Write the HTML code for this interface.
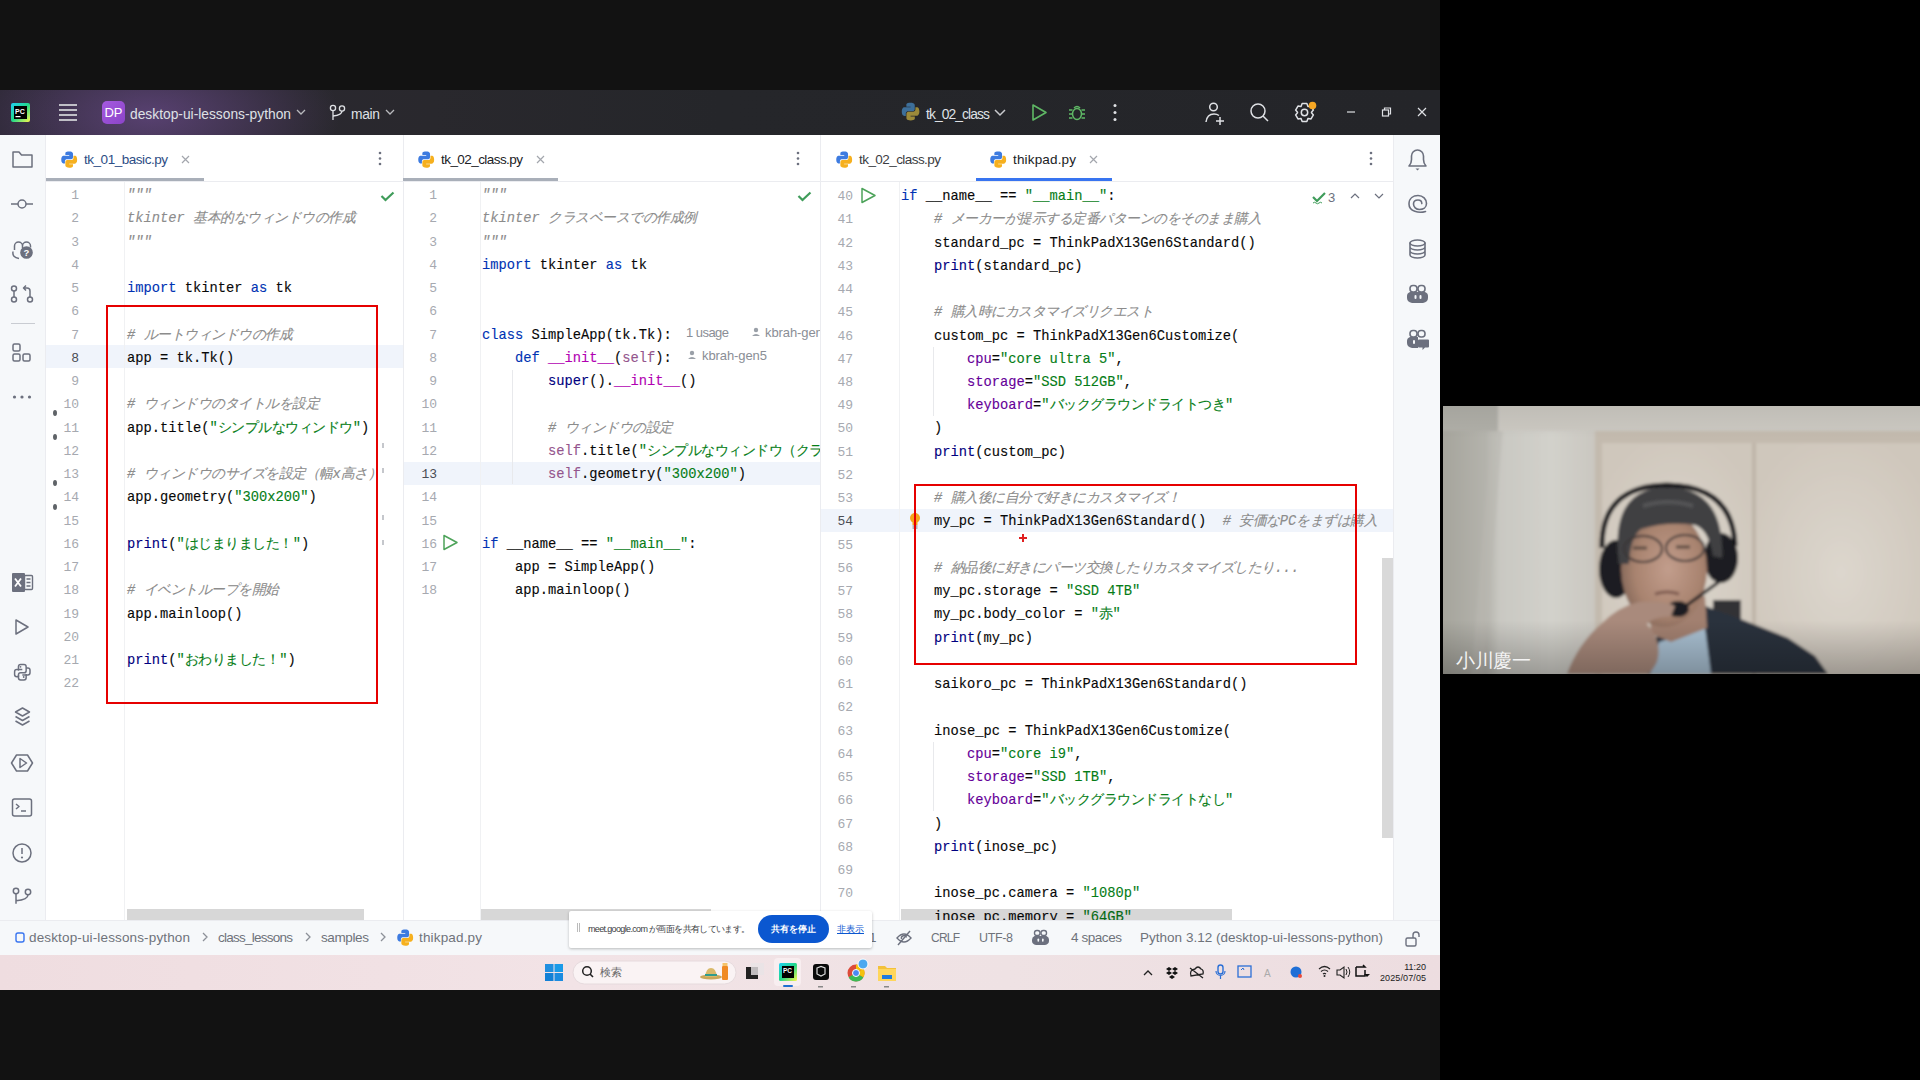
<!DOCTYPE html>
<html><head><meta charset="utf-8">
<style>
*{margin:0;padding:0;box-sizing:border-box}
html,body{width:1920px;height:1080px;overflow:hidden;background:#000}
body{position:relative;font-family:"Liberation Sans",sans-serif}
.a{position:absolute}
#screen{left:0;top:0;width:1440px;height:1080px;background:#121212}
#title{left:0;top:90px;width:1440px;height:45px;background:radial-gradient(ellipse 190px 90px at 150px 25px,rgba(125,85,165,0.55),rgba(125,85,165,0) 100%),linear-gradient(90deg,#2a2731 0%,#2b2832 5%,#29282d 30%,#25262a 50%,#242529 100%)}
#ltool{left:0;top:135px;width:46px;height:785px;background:#f6f8fa;border-right:1px solid #ebecf0}
#rtool{left:1393px;top:135px;width:47px;height:785px;background:#f6f8fa;border-left:1px solid #ebecf0}
.pane{top:135px;height:785px;background:#fff;overflow:hidden}
.tabs{left:0;top:0;right:0;height:47px;border-bottom:1px solid #ebecf0}
.tab{font-size:13.5px;color:#222;top:17px;white-space:nowrap}
.code{font-family:"Liberation Mono",monospace;font-size:13.75px;line-height:23.24px;white-space:pre;color:#080808;-webkit-text-stroke:0.12px currentColor}
.j{letter-spacing:-0.5px}
.ln{font-family:"Liberation Mono",monospace;font-size:13px;line-height:23.24px;color:#a6a9b0;text-align:right;white-space:pre}
.ln.cur{color:#4a4d55}
.hlrow{background:#f0f4fb}
#status{left:0;top:920px;width:1440px;height:35px;background:#f6f8fa;border-top:1px solid #ebecf0}
#taskbar{left:0;top:955px;width:1440px;height:35px;background:linear-gradient(90deg,#efdde0,#f2e3e6 40%,#efe2e4 70%,#eddde0)}
#cam{left:1443px;top:406px;width:477px;height:268px;background:#bdb9b2;overflow:hidden}
.tabbar{top:135px;height:47px;border-bottom:1px solid #ebecf0;background:transparent}
.gsep{top:47px;width:1px;height:738px;background:#f0f1f3}
.hscroll{top:774px;height:11px;background:rgba(0,0,0,0.155)}
.tab{position:absolute;top:151px;font-size:13.5px;color:#202124;white-space:nowrap;line-height:18px}
.hint{font-size:13px;color:#8a8e96;white-space:nowrap;line-height:16px}
.ttl{font-size:13.8px;color:#dfe1e5;white-space:nowrap;line-height:18px;margin-top:1.5px}
.st{top:929px;font-size:13.5px;color:#6f737a;white-space:nowrap;line-height:18px}

</style></head><body>
<div id="screen" class="a"></div>
<div id="title" class="a"></div>
<div id="ltool" class="a"></div>
<div id="p1" class="a pane" style="left:46px;width:357px">
<div class="a ln" style="left:0;width:33.0px;top:49.18px">1</div>
<div class="a code" style="left:81.0px;top:49.18px"><span style="color:#8c8c8c;font-style:italic;">"""</span></div>
<div class="a ln" style="left:0;width:33.0px;top:72.42px">2</div>
<div class="a code" style="left:81.0px;top:72.42px"><span style="color:#8c8c8c;font-style:italic;">tkinter <span class="j">基本的なウィンドウの作成</span></span></div>
<div class="a ln" style="left:0;width:33.0px;top:95.66px">3</div>
<div class="a code" style="left:81.0px;top:95.66px"><span style="color:#8c8c8c;font-style:italic;">"""</span></div>
<div class="a ln" style="left:0;width:33.0px;top:118.90px">4</div>
<div class="a ln" style="left:0;width:33.0px;top:142.14px">5</div>
<div class="a code" style="left:81.0px;top:142.14px"><span style="color:#0033b3;">import</span> tkinter <span style="color:#0033b3;">as</span> tk</div>
<div class="a ln" style="left:0;width:33.0px;top:165.38px">6</div>
<div class="a ln" style="left:0;width:33.0px;top:188.62px">7</div>
<div class="a code" style="left:81.0px;top:188.62px"><span style="color:#8c8c8c;font-style:italic;"># <span class="j">ルートウィンドウの作成</span></span></div>
<div class="a hlrow" style="left:0;top:210.36px;width:357px;height:23px"></div>
<div class="a ln cur" style="left:0;width:33.0px;top:211.86px">8</div>
<div class="a code" style="left:81.0px;top:211.86px">app = tk.Tk()</div>
<div class="a ln" style="left:0;width:33.0px;top:235.10px">9</div>
<div class="a ln" style="left:0;width:33.0px;top:258.34px">10</div>
<div class="a code" style="left:81.0px;top:258.34px"><span style="color:#8c8c8c;font-style:italic;"># <span class="j">ウィンドウのタイトルを設定</span></span></div>
<div class="a ln" style="left:0;width:33.0px;top:281.58px">11</div>
<div class="a code" style="left:81.0px;top:281.58px">app.title(<span style="color:#067d17;">"<span class="j">シンプルなウィンドウ</span>"</span>)</div>
<div class="a ln" style="left:0;width:33.0px;top:304.82px">12</div>
<div class="a ln" style="left:0;width:33.0px;top:328.06px">13</div>
<div class="a code" style="left:81.0px;top:328.06px"><span style="color:#8c8c8c;font-style:italic;"># <span class="j">ウィンドウのサイズを設定（幅</span>x<span class="j">高さ）</span></span></div>
<div class="a ln" style="left:0;width:33.0px;top:351.30px">14</div>
<div class="a code" style="left:81.0px;top:351.30px">app.geometry(<span style="color:#067d17;">"300x200"</span>)</div>
<div class="a ln" style="left:0;width:33.0px;top:374.54px">15</div>
<div class="a ln" style="left:0;width:33.0px;top:397.78px">16</div>
<div class="a code" style="left:81.0px;top:397.78px"><span style="color:#000080;">print</span>(<span style="color:#067d17;">"<span class="j">はじまりました！</span>"</span>)</div>
<div class="a ln" style="left:0;width:33.0px;top:421.02px">17</div>
<div class="a ln" style="left:0;width:33.0px;top:444.26px">18</div>
<div class="a code" style="left:81.0px;top:444.26px"><span style="color:#8c8c8c;font-style:italic;"># <span class="j">イベントループを開始</span></span></div>
<div class="a ln" style="left:0;width:33.0px;top:467.50px">19</div>
<div class="a code" style="left:81.0px;top:467.50px">app.mainloop()</div>
<div class="a ln" style="left:0;width:33.0px;top:490.74px">20</div>
<div class="a ln" style="left:0;width:33.0px;top:513.98px">21</div>
<div class="a code" style="left:81.0px;top:513.98px"><span style="color:#000080;">print</span>(<span style="color:#067d17;">"<span class="j">おわりました！</span>"</span>)</div>
<div class="a ln" style="left:0;width:33.0px;top:537.22px">22</div>
<div class="a gsep" style="left:78px"></div>
<div class="a hscroll" style="left:81px;width:237px"></div>
</div>
<div id="p2" class="a pane" style="left:403px;width:417px;border-left:1px solid #ebecf0">
<div class="a ln" style="left:0;width:33.0px;top:49.18px">1</div>
<div class="a code" style="left:78.0px;top:49.18px"><span style="color:#8c8c8c;font-style:italic;">"""</span></div>
<div class="a ln" style="left:0;width:33.0px;top:72.42px">2</div>
<div class="a code" style="left:78.0px;top:72.42px"><span style="color:#8c8c8c;font-style:italic;">tkinter <span class="j">クラスベースでの作成例</span></span></div>
<div class="a ln" style="left:0;width:33.0px;top:95.66px">3</div>
<div class="a code" style="left:78.0px;top:95.66px"><span style="color:#8c8c8c;font-style:italic;">"""</span></div>
<div class="a ln" style="left:0;width:33.0px;top:118.90px">4</div>
<div class="a code" style="left:78.0px;top:118.90px"><span style="color:#0033b3;">import</span> tkinter <span style="color:#0033b3;">as</span> tk</div>
<div class="a ln" style="left:0;width:33.0px;top:142.14px">5</div>
<div class="a ln" style="left:0;width:33.0px;top:165.38px">6</div>
<div class="a ln" style="left:0;width:33.0px;top:188.62px">7</div>
<div class="a code" style="left:78.0px;top:188.62px"><span style="color:#0033b3;">class</span> SimpleApp(tk.Tk):</div>
<div class="a ln" style="left:0;width:33.0px;top:211.86px">8</div>
<div class="a code" style="left:78.0px;top:211.86px">    <span style="color:#0033b3;">def</span> <span style="color:#b200b2;">__init__</span>(<span style="color:#94558d;">self</span>):</div>
<div class="a ln" style="left:0;width:33.0px;top:235.10px">9</div>
<div class="a code" style="left:78.0px;top:235.10px">        <span style="color:#000080;">super</span>().<span style="color:#b200b2;">__init__</span>()</div>
<div class="a ln" style="left:0;width:33.0px;top:258.34px">10</div>
<div class="a ln" style="left:0;width:33.0px;top:281.58px">11</div>
<div class="a code" style="left:78.0px;top:281.58px"><span style="color:#8c8c8c;font-style:italic;">        # <span class="j">ウィンドウの設定</span></span></div>
<div class="a ln" style="left:0;width:33.0px;top:304.82px">12</div>
<div class="a code" style="left:78.0px;top:304.82px">        <span style="color:#94558d;">self</span>.title(<span style="color:#067d17;">"<span class="j">シンプルなウィンドウ（クラスベース）</span>"</span>)</div>
<div class="a hlrow" style="left:0;top:326.56px;width:417px;height:23px"></div>
<div class="a ln cur" style="left:0;width:33.0px;top:328.06px">13</div>
<div class="a code" style="left:78.0px;top:328.06px">        <span style="color:#94558d;">self</span>.geometry(<span style="color:#067d17;">"300x200"</span>)</div>
<div class="a ln" style="left:0;width:33.0px;top:351.30px">14</div>
<div class="a ln" style="left:0;width:33.0px;top:374.54px">15</div>
<div class="a ln" style="left:0;width:33.0px;top:397.78px">16</div>
<div class="a code" style="left:78.0px;top:397.78px"><span style="color:#0033b3;">if</span> __name__ == <span style="color:#067d17;">"__main__"</span>:</div>
<div class="a ln" style="left:0;width:33.0px;top:421.02px">17</div>
<div class="a code" style="left:78.0px;top:421.02px">    app = SimpleApp()</div>
<div class="a ln" style="left:0;width:33.0px;top:444.26px">18</div>
<div class="a code" style="left:78.0px;top:444.26px">    app.mainloop()</div>
<div class="a hint" style="letter-spacing:-0.544px;left:282px;top:190px">1 usage</div>
<div class="a hint" style="letter-spacing:-0.087px;left:361px;top:190px">kbrah-gen5</div>
<div class="a hint" style="letter-spacing:-0.087px;left:298px;top:213px">kbrah-gen5</div>
<svg class="a" style="left:0;top:0" width="417" height="785"><g fill="#9aa0a8"><circle cx="352" cy="195" r="2.2"/><path d="M348 201 q4 -4 8 0z"/><circle cx="288" cy="218" r="2.2"/><path d="M284 224 q4 -4 8 0z"/></g></svg>
<div class="a gsep" style="left:76px"></div>
<div class="a hscroll" style="left:77px;width:230px"></div>
</div>
<div id="p3" class="a pane" style="left:820px;width:573px;border-left:1px solid #ebecf0">
<div class="a ln" style="left:0;width:32.0px;top:50.08px">40</div>
<div class="a code" style="left:80.0px;top:50.08px"><span style="color:#0033b3;">if</span> __name__ == <span style="color:#067d17;">"__main__"</span>:</div>
<div class="a ln" style="left:0;width:32.0px;top:73.32px">41</div>
<div class="a code" style="left:80.0px;top:73.32px"><span style="color:#8c8c8c;font-style:italic;">    # <span class="j">メーカーが提示する定番パターンのをそのまま購入</span></span></div>
<div class="a ln" style="left:0;width:32.0px;top:96.56px">42</div>
<div class="a code" style="left:80.0px;top:96.56px">    standard_pc = ThinkPadX13Gen6Standard()</div>
<div class="a ln" style="left:0;width:32.0px;top:119.80px">43</div>
<div class="a code" style="left:80.0px;top:119.80px">    <span style="color:#000080;">print</span>(standard_pc)</div>
<div class="a ln" style="left:0;width:32.0px;top:143.04px">44</div>
<div class="a ln" style="left:0;width:32.0px;top:166.28px">45</div>
<div class="a code" style="left:80.0px;top:166.28px"><span style="color:#8c8c8c;font-style:italic;">    # <span class="j">購入時にカスタマイズリクエスト</span></span></div>
<div class="a ln" style="left:0;width:32.0px;top:189.52px">46</div>
<div class="a code" style="left:80.0px;top:189.52px">    custom_pc = ThinkPadX13Gen6Customize(</div>
<div class="a ln" style="left:0;width:32.0px;top:212.76px">47</div>
<div class="a code" style="left:80.0px;top:212.76px">        <span style="color:#660099;">cpu</span>=<span style="color:#067d17;">"core ultra 5"</span>,</div>
<div class="a ln" style="left:0;width:32.0px;top:236.00px">48</div>
<div class="a code" style="left:80.0px;top:236.00px">        <span style="color:#660099;">storage</span>=<span style="color:#067d17;">"SSD 512GB"</span>,</div>
<div class="a ln" style="left:0;width:32.0px;top:259.24px">49</div>
<div class="a code" style="left:80.0px;top:259.24px">        <span style="color:#660099;">keyboard</span>=<span style="color:#067d17;">"<span class="j">バックグラウンドライトつき</span>"</span></div>
<div class="a ln" style="left:0;width:32.0px;top:282.48px">50</div>
<div class="a code" style="left:80.0px;top:282.48px">    )</div>
<div class="a ln" style="left:0;width:32.0px;top:305.72px">51</div>
<div class="a code" style="left:80.0px;top:305.72px">    <span style="color:#000080;">print</span>(custom_pc)</div>
<div class="a ln" style="left:0;width:32.0px;top:328.96px">52</div>
<div class="a ln" style="left:0;width:32.0px;top:352.20px">53</div>
<div class="a code" style="left:80.0px;top:352.20px"><span style="color:#8c8c8c;font-style:italic;">    # <span class="j">購入後に自分で好きにカスタマイズ！</span></span></div>
<div class="a hlrow" style="left:0;top:373.94px;width:573px;height:23px"></div>
<div class="a ln cur" style="left:0;width:32.0px;top:375.44px">54</div>
<div class="a code" style="left:80.0px;top:375.44px">    my_pc = ThinkPadX13Gen6Standard()  <span style="color:#8c8c8c;font-style:italic;"># <span class="j">安価な</span>PC<span class="j">をまずは購入</span></span></div>
<div class="a ln" style="left:0;width:32.0px;top:398.68px">55</div>
<div class="a ln" style="left:0;width:32.0px;top:421.92px">56</div>
<div class="a code" style="left:80.0px;top:421.92px"><span style="color:#8c8c8c;font-style:italic;">    # <span class="j">納品後に好きにパーツ交換したりカスタマイズしたり</span>...</span></div>
<div class="a ln" style="left:0;width:32.0px;top:445.16px">57</div>
<div class="a code" style="left:80.0px;top:445.16px">    my_pc.storage = <span style="color:#067d17;">"SSD 4TB"</span></div>
<div class="a ln" style="left:0;width:32.0px;top:468.40px">58</div>
<div class="a code" style="left:80.0px;top:468.40px">    my_pc.body_color = <span style="color:#067d17;">"<span class="j">赤</span>"</span></div>
<div class="a ln" style="left:0;width:32.0px;top:491.64px">59</div>
<div class="a code" style="left:80.0px;top:491.64px">    <span style="color:#000080;">print</span>(my_pc)</div>
<div class="a ln" style="left:0;width:32.0px;top:514.88px">60</div>
<div class="a ln" style="left:0;width:32.0px;top:538.12px">61</div>
<div class="a code" style="left:80.0px;top:538.12px">    saikoro_pc = ThinkPadX13Gen6Standard()</div>
<div class="a ln" style="left:0;width:32.0px;top:561.36px">62</div>
<div class="a ln" style="left:0;width:32.0px;top:584.60px">63</div>
<div class="a code" style="left:80.0px;top:584.60px">    inose_pc = ThinkPadX13Gen6Customize(</div>
<div class="a ln" style="left:0;width:32.0px;top:607.84px">64</div>
<div class="a code" style="left:80.0px;top:607.84px">        <span style="color:#660099;">cpu</span>=<span style="color:#067d17;">"core i9"</span>,</div>
<div class="a ln" style="left:0;width:32.0px;top:631.08px">65</div>
<div class="a code" style="left:80.0px;top:631.08px">        <span style="color:#660099;">storage</span>=<span style="color:#067d17;">"SSD 1TB"</span>,</div>
<div class="a ln" style="left:0;width:32.0px;top:654.32px">66</div>
<div class="a code" style="left:80.0px;top:654.32px">        <span style="color:#660099;">keyboard</span>=<span style="color:#067d17;">"<span class="j">バックグラウンドライトなし</span>"</span></div>
<div class="a ln" style="left:0;width:32.0px;top:677.56px">67</div>
<div class="a code" style="left:80.0px;top:677.56px">    )</div>
<div class="a ln" style="left:0;width:32.0px;top:700.80px">68</div>
<div class="a code" style="left:80.0px;top:700.80px">    <span style="color:#000080;">print</span>(inose_pc)</div>
<div class="a ln" style="left:0;width:32.0px;top:724.04px">69</div>
<div class="a ln" style="left:0;width:32.0px;top:747.28px">70</div>
<div class="a code" style="left:80.0px;top:747.28px">    inose_pc.camera = <span style="color:#067d17;">"1080p"</span></div>
<div class="a ln" style="left:0;width:32.0px;top:770.52px">71</div>
<div class="a code" style="left:80.0px;top:770.52px">    inose_pc.memory = <span style="color:#067d17;">"64GB"</span></div>
<div class="a gsep" style="left:78px"></div>
<div class="a hscroll" style="left:80px;width:331px"></div>
<div class="a" style="left:561px;top:423px;width:11px;height:280px;background:#d9d9d9"></div>
</div>
<div class="a tabbar" style="left:46px;width:357px"></div>
<div class="a tabbar" style="left:404px;width:416px"></div>
<div class="a tabbar" style="left:821px;width:572px"></div>
<div class="a" style="left:46px;top:178px;width:158px;height:3px;background:#a9afb9"></div>
<div class="a" style="left:403px;top:178px;width:155px;height:3px;background:#a9afb9"></div>
<div class="a" style="left:976px;top:178px;width:136px;height:3px;background:#3874f0"></div>
<div class="a tab" style="letter-spacing:-0.466px;left:84px;color:#2d4d85">tk_01_basic.py</div>
<div class="a tab" style="letter-spacing:-0.562px;left:441px">tk_02_class.py</div>
<div class="a tab" style="letter-spacing:-0.562px;left:859px;color:#3b3d42">tk_02_class.py</div>
<div class="a tab" style="letter-spacing:0.161px;left:1013px">thikpad.py</div>
<div id="rtool" class="a"></div>
<div id="status" class="a"></div>
<div id="taskbar" class="a"></div>
<div id="cam" class="a"></div>
<div class="a ttl" style="letter-spacing:-0.003px;left:130px;top:104px">desktop-ui-lessons-python</div>
<div class="a ttl" style="letter-spacing:-0.302px;left:351px;top:104px">main</div>
<div class="a ttl" style="letter-spacing:-0.886px;left:926px;top:104px">tk_02_class</div>
<div class="a" style="left:102px;top:101px;width:23px;height:23px;border-radius:5px;background:linear-gradient(135deg,#a55ae0,#8b44c8);color:#fff;font-size:13px;line-height:23px;text-align:center;letter-spacing:0px">DP</div>
<div class="a st" style="letter-spacing:0.142px;left:29px">desktop-ui-lessons-python</div>
<div class="a st" style="letter-spacing:-0.754px;left:218px">class_lessons</div>
<div class="a st" style="letter-spacing:-0.380px;left:321px">samples</div>
<div class="a st" style="letter-spacing:0.161px;left:419px">thikpad.py</div>
<div class="a st" style="left:869px">1</div>
<div class="a st" style="letter-spacing:-0.781px;left:931px;font-size:12px">CRLF</div>
<div class="a st" style="letter-spacing:-0.355px;left:979px;font-size:12.5px">UTF-8</div>
<div class="a st" style="letter-spacing:-0.435px;left:1071px">4 spaces</div>
<div class="a st" style="letter-spacing:0.016px;left:1140px">Python 3.12 (desktop-ui-lessons-python)</div>
<svg class="a" style="left:0;top:0" width="1920" height="1080" viewBox="0 0 1920 1080">
<defs>
<linearGradient id="pcg" x1="0" y1="0" x2="1" y2="1"><stop offset="0" stop-color="#21d0f5"/><stop offset="0.5" stop-color="#21d789"/><stop offset="1" stop-color="#fcf84a"/></linearGradient>
<linearGradient id="pyb" x1="0" y1="0" x2="1" y2="1"><stop offset="0" stop-color="#5a9fd4"/><stop offset="1" stop-color="#306998"/></linearGradient>
<g id="py">
 <path d="M8 0.5 C4.3 0.5 4.5 2.1 4.5 2.1 V3.8 H8.1 V4.3 H3.1 C3.1 4.3 0.7 4.1 0.7 7.9 C0.7 11.7 2.8 11.5 2.8 11.5 H4.1 V9.8 C4.1 9.8 4 7.7 6.1 7.7 H9.6 C9.6 7.7 11.6 7.7 11.6 5.8 V2.7 C11.6 2.7 11.8 0.5 8 0.5 Z" fill="#3d7be0"/>
 <path d="M8.1 15.5 C11.8 15.5 11.6 13.9 11.6 13.9 V12.2 H8 V11.7 H13 C13 11.7 15.4 11.9 15.4 8.1 C15.4 4.3 13.3 4.5 13.3 4.5 H12 V6.2 C12 6.2 12.1 8.3 10 8.3 H6.5 C6.5 8.3 4.5 8.3 4.5 10.2 V13.3 C4.5 13.3 4.3 15.5 8.1 15.5 Z" fill="#f6b01e"/>
</g>
</defs>
<!-- ===== title bar ===== -->
<g>
 <rect x="11" y="103" width="19" height="19" rx="2" fill="url(#pcg)"/>
 <rect x="14" y="106" width="13" height="13" fill="#000"/>
 <text x="15" y="113.5" font-family="Liberation Sans" font-size="7" font-weight="bold" fill="#fff">PC</text>
 <rect x="15.5" y="116" width="5" height="1.2" fill="#fff"/>
</g>
<g stroke="#cfd0d4" stroke-width="1.8">
 <line x1="59" y1="105" x2="77" y2="105"/><line x1="59" y1="110" x2="77" y2="110"/><line x1="59" y1="115" x2="77" y2="115"/><line x1="59" y1="120" x2="77" y2="120"/>
</g>
<g fill="none" stroke="#b8b9bd" stroke-width="1.3">
 <path d="M297 110 l4 4 l4 -4"/>
 <path d="M386 110 l4 4 l4 -4"/>
 <path d="M995 110 l5 5 l5 -5" stroke="#c9cacd" stroke-width="1.5"/>
</g>
<g fill="none" stroke="#dfe1e5" stroke-width="1.3">
 <circle cx="333" cy="108" r="2.6"/><circle cx="342" cy="108.5" r="2.6"/>
 <path d="M333 110.6 V120"/><path d="M342 111 q0 4 -9 5"/>
</g>
<!-- python icon in run config -->
<g transform="translate(901,102) scale(0.8)">
 <path d="M11.9 1 C6.3 1 6.7 3.4 6.7 3.4 V5.9 H12 V6.7 H4.6 C4.6 6.7 1 6.3 1 12 C1 17.6 4.1 17.4 4.1 17.4 H6 V14.8 C6 14.8 5.9 11.7 9 11.7 H14.3 C14.3 11.7 17.2 11.7 17.2 8.9 V4.1 C17.2 4.1 17.6 1 11.9 1 Z" fill="#3d6f9a"/>
 <path d="M12.1 23 C17.7 23 17.3 20.6 17.3 20.6 V18.1 H12 V17.3 H19.4 C19.4 17.3 23 17.7 23 12 C23 6.4 19.9 6.6 19.9 6.6 H18 V9.2 C18 9.2 18.1 12.3 15 12.3 H9.7 C9.7 12.3 6.8 12.3 6.8 15.1 V19.9 C6.8 19.9 6.4 23 12.1 23 Z" fill="#9c8a3a"/>
</g>
<g fill="none" stroke="#5fb865" stroke-width="1.6" stroke-linejoin="round">
 <path d="M1033 105 L1046 112.5 L1033 120 Z"/>
</g>
<g fill="none" stroke="#5fb865" stroke-width="1.5">
 <ellipse cx="1077" cy="114" rx="4.5" ry="5.5"/>
 <path d="M1074 108 q3 -3 6 0"/>
 <path d="M1069 110 h3.5 M1069 114 h3.5 M1069 118 h3.5 M1081.5 110 h3.5 M1081.5 114 h3.5 M1081.5 118 h3.5"/>
</g>
<g fill="#dfe1e5"><circle cx="1115" cy="105.5" r="1.5"/><circle cx="1115" cy="112.5" r="1.5"/><circle cx="1115" cy="119.5" r="1.5"/></g>
<g fill="none" stroke="#dfe1e5" stroke-width="1.5">
 <circle cx="1213.5" cy="107" r="3.8"/>
 <path d="M1206 122 q1 -8 8 -8 q3 0 5 1.5"/>
 <path d="M1220 117 v8 M1216 121 h8"/>
 <circle cx="1258" cy="111" r="7"/><path d="M1263 116 l5 5"/>
</g>
<g fill="none" stroke="#dfe1e5" stroke-width="1.5">
 <path d="M1301.14 106.36 L1302.13 103.61 L1306.87 103.61 L1307.86 106.36 L1308.14 106.52 L1311.02 106.01 L1313.38 110.10 L1311.50 112.33 L1311.50 112.67 L1313.38 114.90 L1311.02 118.99 L1308.14 118.48 L1307.86 118.64 L1306.87 121.39 L1302.13 121.39 L1301.14 118.64 L1300.86 118.48 L1297.98 118.99 L1295.62 114.90 L1297.50 112.67 L1297.50 112.33 L1295.62 110.10 L1297.98 106.01 L1300.86 106.52 Z" stroke-linejoin="round"/>
 <circle cx="1304.5" cy="112.5" r="3.2"/>
</g>
<circle cx="1312.5" cy="105.5" r="3.8" fill="#f5a623"/>
<g fill="none" stroke="#dfe1e5" stroke-width="1.2">
 <path d="M1347 112 h8"/>
 <rect x="1382.5" y="110" width="6" height="6"/><path d="M1384.5 110 v-2 h6 v6 h-2"/>
 <path d="M1418 108 l8 8 M1426 108 l-8 8"/>
</g>
<!-- ===== left toolbar ===== -->
<g fill="none" stroke="#6c707e" stroke-width="1.5" stroke-linejoin="round">
 <path d="M13 152 h6 l2.5 3 h10.5 v12 h-19 z"/>
 <path d="M11 204 h7 M26 204 h7"/><circle cx="22" cy="204" r="4"/>
 <circle cx="14" cy="288.5" r="2.5"/><circle cx="14" cy="299.5" r="2.5"/><circle cx="30" cy="299.5" r="2.5"/>
 <path d="M14 291 v6 M30 297 v-6 q0 -3 -3 -3 h-3 M26 285.5 l-2.5 2.5 l2.5 2.5"/>
 <rect x="13" y="344" width="7" height="7" rx="1.5"/><rect x="13" y="354" width="7" height="7" rx="1.5"/><rect x="23" y="354" width="7" height="7" rx="1.5"/>
 <path d="M16 620 l12 7 l-12 7 z"/>
 <path d="M15.5 712 l7 -4 l7 4 l-7 4 z M15.5 716.5 l7 4 l7 -4 M15.5 721 l7 4 l7 -4"/>
 <path d="M16.5 755 h11 l5 8 l-5 8 h-11 l-5 -8 z"/><path d="M20 758.5 l6.5 4.5 l-6.5 4.5 z"/>
 <rect x="12.5" y="799" width="19" height="17" rx="2"/><path d="M16 804 l3 2.5 l-3 2.5 M21 811 h5"/>
 <circle cx="22" cy="853" r="9"/><path d="M22 848 v6"/>
 <circle cx="16" cy="891" r="2.7"/><circle cx="28" cy="892" r="2.7"/><path d="M16 893.7 v10 M28 894.7 q0 5 -12 6"/>
</g>
<g fill="#6c707e"><circle cx="22" cy="857.5" r="1.1"/>
 <circle cx="14.5" cy="397" r="1.6"/><circle cx="22" cy="397" r="1.6"/><circle cx="29.5" cy="397" r="1.6"/>
</g>
<rect x="11" y="323" width="24" height="1" fill="#c9ccd2"/>
<!-- AI help icon -->
<g fill="none" stroke="#6c707e" stroke-width="1.5"><path d="M14.5 250 v-4 a4 4 0 0 1 8 0 v2 M22.5 246 a4 4 0 0 1 8 0 v1.5 M13 251.5 q-1 6 6 7"/></g>
<circle cx="26.5" cy="252.5" r="6.3" fill="#6c707e"/><text x="26.5" y="256" font-family="Liberation Sans" font-size="9.5" font-weight="bold" fill="#fff" text-anchor="middle">?</text>
<!-- excel -->
<g>
 <rect x="12" y="573" width="13" height="19" rx="1" fill="#6c707e"/>
 <rect x="24.5" y="575.5" width="8" height="14" rx="1" fill="none" stroke="#6c707e" stroke-width="1.4"/>
 <path d="M26.5 579 h4 M26.5 582.5 h4 M26.5 586 h4" stroke="#6c707e" stroke-width="1.4"/>
 <path d="M15 578.5 l6 8 M21 578.5 l-6 8" stroke="#fff" stroke-width="1.8"/>
</g>
<!-- indent guides -->
<g fill="#e8e9ec"><rect x="512" y="370" width="1" height="114"/><rect x="933" y="347" width="1" height="69"/><rect x="933" y="742" width="1" height="69"/></g>
<!-- python console -->
<g transform="translate(13.5,663.5) scale(1.1)" fill="none" stroke="#6c707e" stroke-width="1.35" stroke-linejoin="round">
 <path d="M4.5 6.5 V3 Q4.5 1 6.5 1 H9.5 Q11.5 1 11.5 3 V6.5 Q11.5 8.5 9.5 8.5 H6.5 Q4.5 8.5 4.5 10.5 V12 H3 Q1 12 1 10 V7.5 Q1 5.5 3 5.5 H8"/>
 <path d="M11.5 9.5 V13 Q11.5 15 9.5 15 H6.5 Q4.5 15 4.5 13 V10.5 M11.5 4 H13 Q15 4 15 6 V8.5 Q15 10.5 13 10.5 H8"/>
</g>
<g fill="#6c707e"><circle cx="20.5" cy="666.8" r="0.9"/><circle cx="23.7" cy="677" r="0.9"/></g>
<!-- ===== right toolbar ===== -->
<g fill="none" stroke="#6c707e" stroke-width="1.6" stroke-linejoin="round" stroke-linecap="round">
 <path d="M1409 166 h17 q-2.5 -2.5 -2.5 -6.5 v-3.5 a6 6 0 0 0 -12 0 v3.5 q0 4 -2.5 6.5 z"/>
 <path d="M1425.5 211.5 C1419 213.5 1409 211.5 1409 204 C1409 198 1413.5 195.5 1418 195.5 C1423 195.5 1426.5 199 1426.5 203.5 C1426.5 207.5 1423 209.5 1419.5 209.5 C1416 209.5 1413.5 207 1413.5 204 C1413.5 201.5 1415.5 200 1418 200 C1420.2 200 1421.8 201.6 1421.8 203.6"/>
 <ellipse cx="1417.5" cy="243" rx="7.5" ry="3"/><path d="M1410 243 v12 a7.5 3 0 0 0 15 0 v-12 M1410 247 a7.5 3 0 0 0 15 0 M1410 251 a7.5 3 0 0 0 15 0"/>
 <rect x="1410" y="285.5" width="7" height="6.5" rx="3"/><rect x="1418" y="285.5" width="7" height="6.5" rx="3"/>
 <rect x="1410" y="330.5" width="7" height="6.5" rx="3"/><rect x="1418" y="330.5" width="7" height="6.5" rx="3"/>
</g>
<g fill="#6c707e">
 <path d="M1410 292 h15 q3 1 3 4 v2 q0 4 -5 5 h-11 q-5 -1 -5 -5 v-2 q0 -3 3 -4z"/>
 <path d="M1410 337 h8 v11 h-6 q-5 -1 -5 -5 v-2 q0 -3 3 -4z"/>
 <path d="M1419 339.5 h9 q1 0 1 1 v6 q0 1 -1 1 h-3 l-2.5 2.5 v-2.5 h-3.5 q-1 0 -1 -1 v-6 q0 -1 1 -1z"/>
</g>
<path d="M1415.5 168.5 h4 l-2 2z" fill="#6c707e"/>
<g fill="#f6f8fa"><rect x="1414.5" y="295" width="2" height="4" rx="1"/><rect x="1419.5" y="295" width="2" height="4" rx="1"/><rect x="1413" y="340" width="2" height="4" rx="1"/></g>
<!-- ===== tabs: python icons ===== -->


<!-- tab close / kebab -->
<g fill="none" stroke="#a3a6ad" stroke-width="1.2">
 <path d="M182 156 l7 7 M189 156 l-7 7"/>
 <path d="M537 156 l7 7 M544 156 l-7 7"/>
 <path d="M1090 156 l7 7 M1097 156 l-7 7"/>
</g>
<g fill="#6c707e">
 <circle cx="380" cy="153" r="1.3"/><circle cx="380" cy="158.5" r="1.3"/><circle cx="380" cy="164" r="1.3"/>
 <circle cx="798" cy="153" r="1.3"/><circle cx="798" cy="158.5" r="1.3"/><circle cx="798" cy="164" r="1.3"/>
 <circle cx="1371" cy="153" r="1.3"/><circle cx="1371" cy="158.5" r="1.3"/><circle cx="1371" cy="164" r="1.3"/>
</g>
<!-- check marks -->
<g fill="none" stroke="#3f9c5a" stroke-width="2.2">
 <path d="M381.5 196 l4 4 l8 -7.5"/>
 <path d="M798.5 196 l4 4 l8 -7.5"/>
 <path d="M1313 197 l4 4 l8 -8"/>
</g>
<path d="M1313 203 q1.5 -1.5 3 0 q1.5 1.5 3 0 q1.5 -1.5 3 0" fill="none" stroke="#3f9c5a" stroke-width="1"/>
<text x="1328" y="202" font-family="Liberation Sans" font-size="13" fill="#6c707e">3</text>
<g fill="none" stroke="#6c707e" stroke-width="1.2"><path d="M1351 198 l4 -4 l4 4"/><path d="M1375 194 l4 4 l4 -4"/></g>
<!-- gutter run icons -->
<g fill="none" stroke="#4da35a" stroke-width="1.5" stroke-linejoin="round">
 <path d="M862 188.5 L875 195.5 L862 202.5 Z"/>
 <path d="M444 535.5 L457 542.5 L444 549.5 Z"/>
</g>
<!-- bulb -->
<circle cx="915" cy="518" r="5" fill="#f5a41a"/><path d="M912.5 522 h5 v3 h-5z" fill="#f5a41a"/>
<path d="M912.5 526 h5 M912.5 528 h5" stroke="#555" stroke-width="0.8"/>
<!-- red plus -->
<path d="M1019 538 h8 M1023 534 v8" stroke="#e02020" stroke-width="2"/>
<!-- red boxes -->
<rect x="107" y="306" width="270" height="397" fill="none" stroke="#e60000" stroke-width="2"/>
<rect x="915" y="485" width="441" height="179" fill="none" stroke="#e60000" stroke-width="2"/>
<!-- bookmarks / markers -->
<g fill="#5f6368"><ellipse cx="55" cy="413" rx="2" ry="3"/><ellipse cx="55" cy="437" rx="2" ry="3"/><ellipse cx="55" cy="483" rx="2" ry="3"/><ellipse cx="55" cy="507" rx="2" ry="3"/></g>
<g fill="#c5c7cc"><rect x="382" y="443" width="2" height="5"/><rect x="382" y="468" width="2" height="5"/><rect x="382" y="515" width="2" height="5"/><rect x="382" y="540" width="2" height="5"/></g>
<use href="#py" transform="translate(60.5,151.0) scale(1.08)"/><use href="#py" transform="translate(417.5,151.0) scale(1.08)"/><use href="#py" transform="translate(835.5,151.0) scale(1.08)"/><use href="#py" transform="translate(989.5,151.0) scale(1.08)"/><use href="#py" transform="translate(396.5,929.0) scale(1.08)"/>
</svg>

<svg class="a" style="left:0;top:0" width="1440" height="1080" viewBox="0 0 1440 1080">
<!-- status bar icons -->
<rect x="16" y="933" width="8" height="9" rx="2" fill="none" stroke="#3874f0" stroke-width="1.4"/>
<g fill="none" stroke="#8c9098" stroke-width="1.3">
 <path d="M203 933 l4 4 l-4 4 M306 933 l4 4 l-4 4 M381 933 l4 4 l-4 4"/>
</g>
<g fill="none" stroke="#6c707e" stroke-width="1.4">
 <path d="M897 938 q7 -8 14 0 q-7 8 -14 0 z"/><path d="M901.5 939 a2.6 2.6 0 0 1 5 -1.5"/><path d="M898 945 l12 -14"/>
 <rect x="1034.5" y="930.5" width="5.5" height="5" rx="2.3"/><rect x="1041" y="930.5" width="5.5" height="5" rx="2.3"/>
</g>
<path d="M1034.5 936 h12 q2.5 1 2.5 3.5 v1.5 q0 3.2 -4 4 h-9 q-4 -0.8 -4 -4 v-1.5 q0 -2.5 2.5 -3.5z" fill="#6c707e"/>
<g fill="#f6f8fa"><rect x="1037.5" y="938.5" width="1.6" height="3.2" rx="0.8"/><rect x="1042" y="938.5" width="1.6" height="3.2" rx="0.8"/></g>
<g fill="none" stroke="#6c707e" stroke-width="1.4">
 <rect x="1406" y="938" width="10" height="8" rx="1.5"/><path d="M1413 938 v-3 a3 3 0 0 1 6 0 v2"/>
</g>
<!-- taskbar -->
<g>
 <rect x="545" y="964" width="8.5" height="8" fill="#1f8fe0"/><rect x="554.5" y="964" width="8.5" height="8" fill="#1a9ae8"/>
 <rect x="545" y="973" width="8.5" height="8" fill="#1280d6"/><rect x="554.5" y="973" width="8.5" height="8" fill="#1a8be0"/>
</g>
<rect x="573" y="961" width="163" height="23" rx="11.5" fill="#faf3f4" stroke="#e6dadd" stroke-width="1"/>
<circle cx="587" cy="971" r="4.3" fill="none" stroke="#222" stroke-width="1.5"/><path d="M590 974 l3 3" stroke="#222" stroke-width="1.6"/>
<text x="600" y="976" font-size="10.5" fill="#666">検索</text>
<ellipse cx="711" cy="977" rx="11" ry="2.5" fill="#c9a75a"/><path d="M705 977 q1 -9 6 -9 q5 0 6 9 z" fill="#d9b96a"/><rect x="705" y="974" width="12" height="2" fill="#2f9c8e"/>
<rect x="722" y="966" width="6" height="14" rx="1" fill="#f08a24"/><rect x="722.5" y="963" width="5" height="3" fill="#f5c36a"/>
<rect x="746" y="967" width="12" height="12" fill="#222"/><rect x="751" y="963" width="13" height="12" fill="#e8e4e6" opacity="0.8"/>
<rect x="774" y="958" width="27" height="28" rx="4" fill="#f8eef0"/>
<rect x="779" y="963" width="18" height="18" rx="1.5" fill="url(#pcg2)"/><rect x="782" y="966" width="12" height="12" fill="#000"/>
<text x="783" y="973" font-family="Liberation Sans" font-size="6.5" font-weight="bold" fill="#fff">PC</text>
<rect x="783" y="985" width="10" height="2" rx="1" fill="#1f6fd0"/>
<rect x="813" y="964" width="16" height="16" rx="3" fill="#0a0a0a"/><path d="M817 968 l4 -1.5 l4 1.5 v6 l-4 2 l-4 -2z" fill="none" stroke="#ddd" stroke-width="1.2"/>
<rect x="818" y="986" width="5" height="1.5" fill="#888"/>
<circle cx="856" cy="973" r="8.5" fill="#dd4b39"/><path d="M856 973 l0 -8.5 a8.5 8.5 0 0 1 7.4 4.2z" fill="#f4c20d"/><path d="M856 973 l7.4 4.3 a8.5 8.5 0 0 1 -14.8 0z" fill="#3cba54"/><path d="M856 973 l7.4 -4.3 a8.5 8.5 0 0 1 0 8.6z" fill="#f4c20d"/><circle cx="856" cy="973" r="3.5" fill="#4a8af4" stroke="#fff" stroke-width="1"/>
<circle cx="863" cy="964" r="5" fill="#4aa8f0" stroke="#fff" stroke-width="1"/>
<rect x="851" y="986" width="5" height="1.5" fill="#888"/>
<path d="M878 966 h7 l2 2 h9 v13 h-18z" fill="#f3c13a"/><rect x="878" y="969" width="18" height="12" fill="#ffd65c"/><rect x="882" y="975" width="10" height="4" fill="#1f7ae0"/>
<rect x="884" y="986" width="5" height="1.5" fill="#888"/>
<!-- tray -->
<path d="M1144 975 l4 -4 l4 4" fill="none" stroke="#222" stroke-width="1.3"/>
<path d="M1166 969 l3 -2 l3 2 l-3 2z M1172 969 l3 -2 l3 2 l-3 2z M1166 973 l3 -2 l3 2 l-3 2z M1172 973 l3 -2 l3 2 l-3 2z M1169 977 l3 -2 l3 2 l-3 2z" fill="#111"/>
<path d="M1191 976 q-2 -6 4 -7 q3 -4 6 0 q3 1 2 5 z M1190 968 l13 10" fill="none" stroke="#222" stroke-width="1.3"/>
<rect x="1218" y="965" width="5" height="9" rx="2.5" fill="none" stroke="#2b6fd6" stroke-width="1.4"/><path d="M1216 971 a4.5 4.5 0 0 0 9 0 M1220.5 976 v3" fill="none" stroke="#2b6fd6" stroke-width="1.2"/>
<rect x="1238" y="966" width="13" height="11" fill="none" stroke="#2b6fd6" stroke-width="1.3"/><path d="M1241 970 l2 -2 l1 2" stroke="#2b6fd6" fill="none"/>
<text x="1264" y="977" font-size="10" fill="#aaa">A</text>
<circle cx="1296" cy="972" r="5.5" fill="#1f6fd6"/><circle cx="1300" cy="976" r="2" fill="#e84a3a"/>
<path d="M1319 969 q5.5 -5 11 0 M1321 971.5 q3.5 -3 7 0 M1323 974 q1.5 -1.2 3 0" fill="none" stroke="#222" stroke-width="1.2"/><circle cx="1324.5" cy="976" r="1" fill="#222"/>
<path d="M1337 970 h3 l4 -3 v11 l-4 -3 h-3z" fill="none" stroke="#222" stroke-width="1.1"/><path d="M1346 969 q2 3 0 6 M1348 967 q3.5 5 0 10" fill="none" stroke="#222" stroke-width="1"/>
<path d="M1356 967 h9 l-2 -2 M1356 967 v9 h9 v-6" fill="none" stroke="#111" stroke-width="1.5"/><path d="M1364 974 l3 3 l3 -3z" fill="#111"/>
<text x="1426" y="969.5" font-size="9" fill="#222" text-anchor="end">11:20</text>
<text x="1426" y="980.5" font-size="9" fill="#222" text-anchor="end" textLength="46">2025/07/05</text>
<defs><linearGradient id="pcg2" x1="0" y1="0" x2="1" y2="1"><stop offset="0" stop-color="#21d0f5"/><stop offset="0.5" stop-color="#21d789"/><stop offset="1" stop-color="#fcf84a"/></linearGradient></defs>
</svg>
<!-- meet notification -->
<div class="a" style="left:569px;top:911px;width:303px;height:37px;background:#fff;box-shadow:0 1px 3px rgba(0,0,0,0.25);border-radius:2px"></div>
<div class="a" style="left:577px;top:923px;width:1px;height:9px;background:#bbb"></div>
<div class="a" style="left:579px;top:923px;width:1px;height:9px;background:#bbb"></div>
<div class="a" style="letter-spacing:-0.650px;left:588px;top:923px;font-size:9px;color:#3c4043;white-space:nowrap;line-height:12px">meet.google.com が画面を共有しています。</div>
<div class="a" style="left:758px;top:915px;width:71px;height:28px;border-radius:14px;background:#0b57d0;color:#fff;font-size:9px;font-weight:bold;text-align:center;line-height:28px">共有を停止</div>
<div class="a" style="letter-spacing:0.000px;left:837px;top:923px;font-size:9px;color:#0b57d0;text-decoration:underline;white-space:nowrap;line-height:12px">非表示</div>
<!-- webcam -->
<div class="a" style="left:1443px;top:406px;width:477px;height:268px;overflow:hidden;background:#c9c5bd">
<svg width="477" height="268" viewBox="0 0 477 268" style="position:absolute;left:0;top:0">
<defs>
<filter id="bl" x="-5%" y="-5%" width="110%" height="110%"><feGaussianBlur stdDeviation="1.4"/></filter>
<linearGradient id="wall" x1="0" y1="0" x2="1" y2="0">
 <stop offset="0" stop-color="#a4a39b"/><stop offset="0.3" stop-color="#b4b3ac"/><stop offset="0.38" stop-color="#c9c8c2"/><stop offset="0.7" stop-color="#d2d1cb"/><stop offset="1" stop-color="#c9c6bf"/>
</linearGradient>
<linearGradient id="shade" x1="0" y1="0" x2="0" y2="1">
 <stop offset="0" stop-color="#000" stop-opacity="0.06"/><stop offset="0.12" stop-color="#000" stop-opacity="0"/><stop offset="0.8" stop-color="#000" stop-opacity="0"/><stop offset="1" stop-color="#000" stop-opacity="0.25"/>
</linearGradient>
<radialGradient id="face" cx="0.55" cy="0.5" r="0.6"><stop offset="0" stop-color="#c29d8c"/><stop offset="0.65" stop-color="#a8836f"/><stop offset="1" stop-color="#7f6356"/></radialGradient>
<radialGradient id="door" cx="0.5" cy="0.55" r="0.6"><stop offset="0" stop-color="#dcd6cd"/><stop offset="1" stop-color="#cfc7bc"/></radialGradient>
</defs>
<g filter="url(#bl)">
<rect x="-5" y="-5" width="490" height="280" fill="#d1cbc3"/>
<rect x="-5" y="-5" width="162" height="280" fill="url(#wall)"/>
<path d="M50 -5 L62 -5 L40 275 L28 275 Z" fill="#b9b8b1" opacity="0.6"/>
<rect x="152" y="25" width="330" height="250" fill="#c3baae"/>
<rect x="159" y="37" width="150" height="235" fill="url(#door)"/>
<rect x="309" y="37" width="4" height="235" fill="#bfb5a9"/>
<rect x="313" y="37" width="170" height="235" fill="url(#door)"/>
<rect x="-5" y="-5" width="490" height="30" fill="#ccc9c2"/>
<rect x="-5" y="-5" width="60" height="30" fill="#b0afa8"/>
<!-- back chair -->
<rect x="270" y="194" width="28" height="24" fill="#333234"/>
<!-- jacket -->
<path d="M196 268 L212 232 L262 200 L300 214 L345 232 L372 250 L385 268 Z" fill="#29323e"/>
<!-- tshirt -->
<path d="M207 268 L216 236 L262 222 L268 268 Z" fill="#a9c0d2"/>
<!-- neck -->
<path d="M206 192 L262 190 L264 222 L228 236 L208 228 Z" fill="#a2806f"/>
<!-- headphone cups -->
<ellipse cx="173" cy="163" rx="17" ry="29" fill="#1d1e22"/>
<ellipse cx="278" cy="152" rx="17" ry="25" fill="#1d1e22"/>
<!-- face -->
<ellipse cx="221" cy="163" rx="43" ry="58" fill="url(#face)"/>
<!-- hair -->
<path d="M176 158 Q166 82 224 81 Q282 82 279 152 L270 150 Q266 124 252 119 Q224 115 198 123 Q187 131 186 158 Z" fill="#3f4042"/>
<path d="M200 100 Q225 92 250 100" stroke="#6a6a6a" stroke-width="4" fill="none" opacity="0.5"/>
<!-- headband -->
<path d="M159 142 Q158 80 224 79 Q290 80 292 140" fill="none" stroke="#19191c" stroke-width="5"/>
<!-- glasses -->
<ellipse cx="200" cy="143" rx="19" ry="13" fill="none" stroke="#3a3436" stroke-width="2"/>
<ellipse cx="242" cy="142" rx="19" ry="13" fill="none" stroke="#3a3436" stroke-width="2"/>
<!-- brows/eyes -->
<path d="M190 142 h14 M233 141 h14" stroke="#5a4840" stroke-width="3"/>
<!-- mouth -->
<path d="M212 188 q12 -4 24 0" stroke="#7d5a50" stroke-width="3" fill="none"/>
<!-- mic -->
<path d="M284 170 L240 202" stroke="#1e1e20" stroke-width="3"/>
<ellipse cx="235" cy="203" rx="11" ry="8" fill="#1e1e20"/>
<!-- hand -->
<path d="M124 268 Q135 238 158 218 Q176 200 196 196 Q220 194 232 200 L228 210 Q210 211 204 218 Q220 236 214 256 Q208 268 204 268 Z" fill="#a98a7c"/>
</g>
<rect x="0" y="0" width="477" height="268" fill="url(#shade)"/>
<text x="13" y="261" font-size="19" fill="#f4f4f4" font-family="Liberation Sans" style="letter-spacing:-0.5px">小川慶一</text>
</svg>

</div>

</body></html>
